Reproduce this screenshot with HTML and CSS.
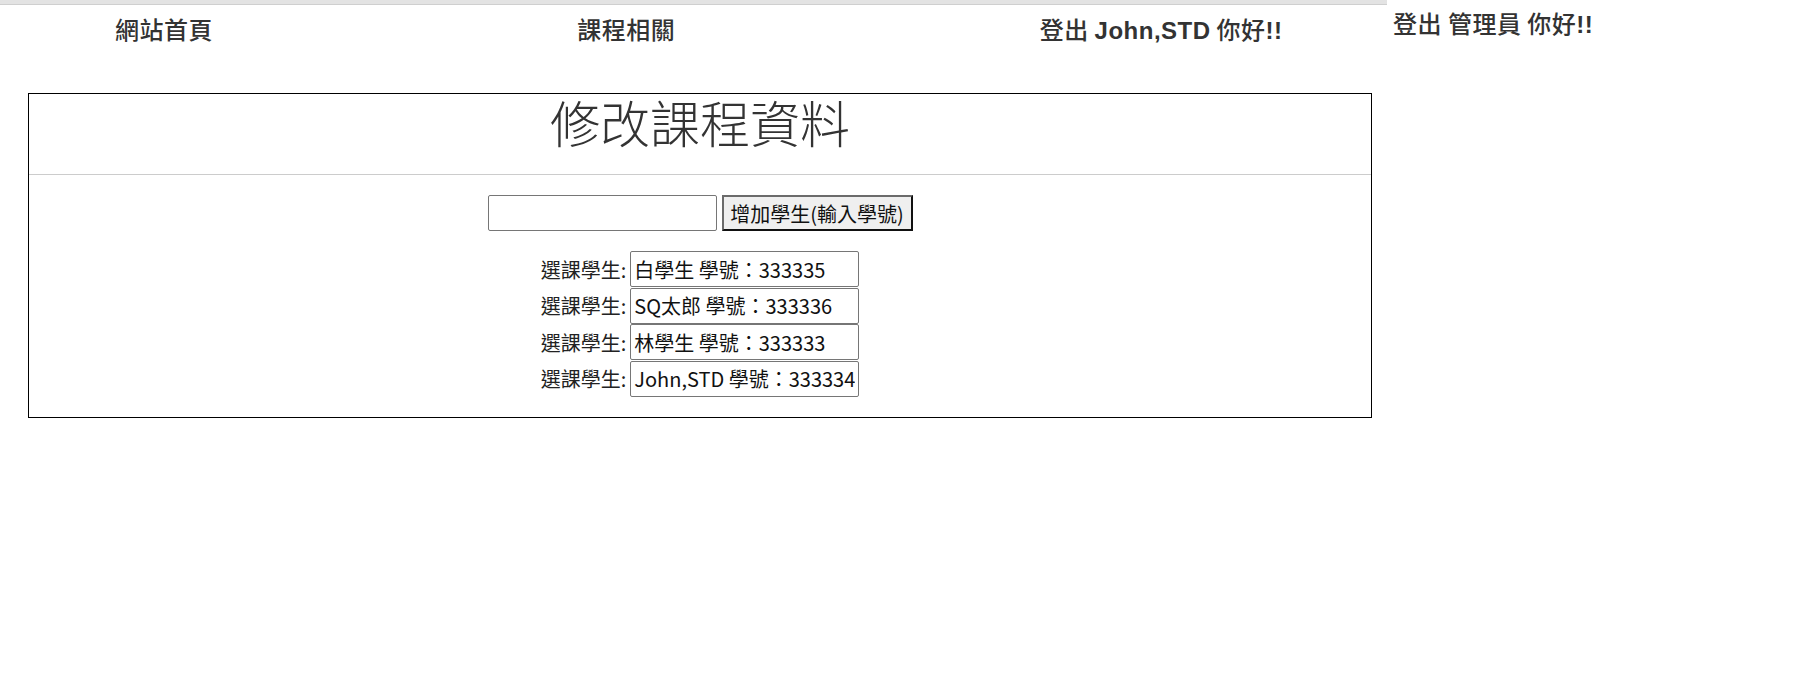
FILE: index.html
```html
<!DOCTYPE html>
<html lang="zh-Hant">
<head>
<meta charset="utf-8">
<title>修改課程資料</title>
<link rel="stylesheet" href="styles.css">
</head>
<body>
<header class="top">
  <nav class="nav">
    <div class="strip"></div>
    <div class="nav-items">
      <a class="nav-item" href="#">網站首頁</a>
      <a class="nav-item" href="#">課程相關</a>
      <a class="nav-item" href="#">登出 <span class="latin">John,STD</span> 你好<span class="latin">!!</span></a>
    </div>
  </nav>
  <span class="admin">登出 管理員 你好<span class="latin">!!</span></span>
</header>

<main class="panel">
  <div class="panel-head">
    <h1 class="title">修改課程資料</h1>
  </div>
  <div class="panel-body">
    <div class="add-row">
      <input class="field" type="text">
      <button class="btn" type="button">增加學生(輸入學號)</button>
    </div>
    <div class="students">
      <div class="student-row"><span class="label">選課學生:</span><input class="field" type="text" value="白學生 學號：333335"></div>
      <div class="student-row"><span class="label">選課學生:</span><input class="field" type="text" value="SQ太郎 學號：333336"></div>
      <div class="student-row"><span class="label">選課學生:</span><input class="field" type="text" value="林學生 學號：333333"></div>
      <div class="student-row"><span class="label">選課學生:</span><input class="field" type="text" value="John,STD 學號：333334"></div>
    </div>
  </div>
</main>
</body>
</html>
```
FILE: styles.css
```css
html, body {
  margin: 0;
  padding: 0;
  background: #fff;
}

body {
  font-family: "Liberation Sans", "Noto Sans CJK TC", sans-serif;
  color: #333;
}

.top {
  display: flex;
  align-items: flex-start;
  height: 53px;
}

.nav {
  width: 1387px;
  display: flex;
  flex-direction: column;
}

.strip {
  height: 4px;
  background: #e3e3e3;
  border-bottom: 1px solid #cfcfcf;
}

.nav-items {
  display: grid;
  grid-template-columns: repeat(3, 1fr);
  height: 48px;
}

.nav-item {
  padding-left: 115px;
  height: 48px;
  font-family: "Noto Sans CJK TC", sans-serif;
  font-size: 24px;
  line-height: 48px;
  font-weight: 500;
  letter-spacing: 0.5px;
  color: #333;
  text-decoration: none;
  white-space: nowrap;
}

.latin {
  font-family: "Liberation Sans", sans-serif;
  font-weight: 700;
}

.admin {
  margin-left: 6px;
  height: 45px;
  font-family: "Noto Sans CJK TC", sans-serif;
  font-size: 24px;
  line-height: 45px;
  font-weight: 500;
  letter-spacing: 0.5px;
  color: #333;
  white-space: nowrap;
}

.panel {
  margin: 40px 0 0 28px;
  width: 1344px;
  box-sizing: border-box;
  border: 1px solid #000;
}

.panel-head {
  height: 80px;
  border-bottom: 1px solid #ccc;
}

.title {
  margin: 0;
  text-align: center;
  font-family: "Noto Sans CJK TC", sans-serif;
  font-weight: 300;
  font-size: 50px;
  line-height: 54px;
  color: #333;
}

.panel-body {
  padding: 20px 0 20px;
  display: flex;
  flex-direction: column;
  align-items: center;
  gap: 20px;
  font-family: "Noto Sans CJK TC", sans-serif;
  font-size: 20px;
  color: #222;
}

.add-row {
  display: flex;
  align-items: center;
  gap: 5px;
}

.field {
  box-sizing: border-box;
  width: 229px;
  height: 36px;
  padding: 0 3px;
  border: 1px solid #767676;
  border-radius: 2px;
  font-family: "Noto Sans CJK TC", sans-serif;
  font-size: 20px;
  color: #111;
  background: #fff;
}

.btn {
  box-sizing: border-box;
  height: 36px;
  width: 191px;
  padding: 0 6px;
  border: 2px solid;
  border-color: #6b6b6b #111 #111 #6b6b6b;
  background: #efefef;
  font-family: "Noto Sans CJK TC", sans-serif;
  font-size: 20px;
  color: #111;
  white-space: nowrap;
}

.students {
  display: flex;
  flex-direction: column;
}

.student-row {
  display: flex;
  align-items: center;
  height: 36.5px;
  gap: 4px;
}

.label {
  font-size: 20px;
  color: #222;
}
```
